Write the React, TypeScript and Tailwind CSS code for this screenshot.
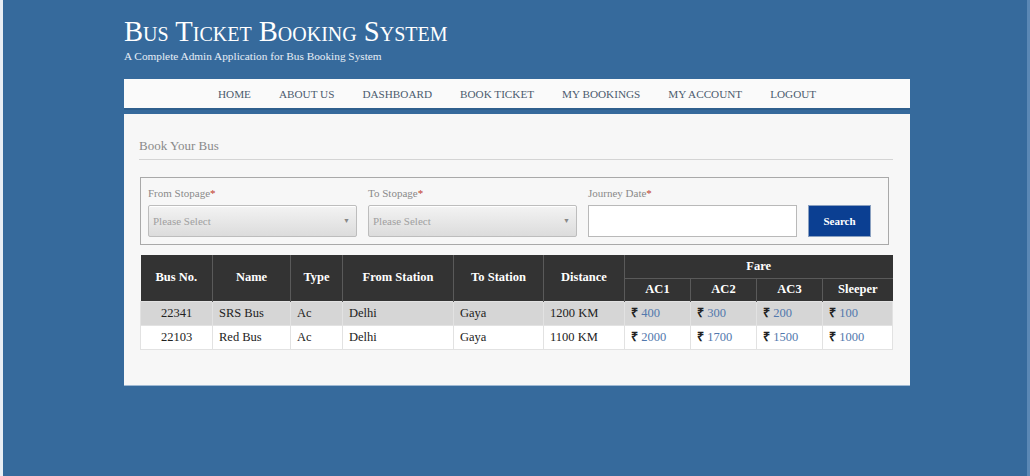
import React from "react";

const serif = { fontFamily: '"Liberation Serif", "Times New Roman", serif' };

const rows = [
  { no: "22341", name: "SRS Bus", type: "Ac", from: "Delhi", to: "Gaya", dist: "1200 KM", f: ["400", "300", "200", "100"], bg: "bg-[#d6d6d6]" },
  { no: "22103", name: "Red Bus", type: "Ac", from: "Delhi", to: "Gaya", dist: "1100 KM", f: ["2000", "1700", "1500", "1000"], bg: "bg-white" },
];

function Select({ w }: { w: string }) {
  return (
    <div className={`${w} h-[32px] border border-[#bdbdbd] rounded-[2px] bg-gradient-to-b from-[#f3f3f3] to-[#dcdcdc] flex items-center justify-between px-[4px] shadow-[inset_0_1px_0_#fff]`}>
      <span className="text-[11px] text-[#a0a0a0]">Please Select</span>
      <span className="text-[7px] text-[#888] pr-[2px]">▼</span>
    </div>
  );
}

export default function App() {
  return (
    <div style={serif} className="w-[1030px] h-[476px] bg-[#366a9c] border-l-[3px] border-l-[#e9eef4] border-r-[3px] border-r-[#5b88b5] overflow-hidden">
      <div className="pl-[121px] w-[907px]">
        <div className="pt-[15px] h-[79px]">
          <div className="text-[28.6px] leading-[34px] text-white [font-variant:small-caps]">Bus Ticket Booking System</div>
          <div className="text-[11.3px] leading-[12px] text-[#e6eef7] mt-[1px]">A Complete Admin Application for Bus Booking System</div>
        </div>
        <nav className="h-[31px] bg-[#fafafa] border-b-[2px] border-b-[#2f5f8d] flex items-center pl-[94px] gap-[28px] text-[11.2px] text-[#4b5b6e] pt-[1px]">
          <span>HOME</span>
          <span>ABOUT US</span>
          <span>DASHBOARD</span>
          <span>BOOK TICKET</span>
          <span>MY BOOKINGS</span>
          <span>MY ACCOUNT</span>
          <span>LOGOUT</span>
        </nav>
        <div className="mt-[4px] h-[271px] bg-[#f7f7f7] pl-[15px] pr-[17px] pt-[24px] shadow-[0_1px_0_#9fb9d3]">
          <div className="text-[13px] leading-[16px] text-[#8a8a8a] pb-[5px] border-b border-b-[#d4d4d4]">Book Your Bus</div>
          <div className="mt-[17px] ml-[1px] w-[749px] h-[68px] border border-[#a9a9a9] px-[7px] pt-[8px]">
            <div className="flex gap-[11px]">
              <div className="flex flex-col">
                <div className="text-[11px] leading-[14px] text-[#8a8a8a] mb-[5px]">From Stopage<span className="text-[#c0392b]">*</span></div>
                <Select w="w-[209px]" />
              </div>
              <div className="flex flex-col">
                <div className="text-[11px] leading-[14px] text-[#8a8a8a] mb-[5px]">To Stopage<span className="text-[#c0392b]">*</span></div>
                <Select w="w-[209px]" />
              </div>
              <div className="flex flex-col">
                <div className="text-[11px] leading-[14px] text-[#8a8a8a] mb-[5px]">Journey Date<span className="text-[#c0392b]">*</span></div>
                <div className="w-[209px] h-[32px] bg-white border border-[#b9b9b9]" />
              </div>
              <div className="flex flex-col justify-end">
                <div className="w-[63px] h-[32px] bg-[#0b3f92] border border-[#8aa0c0] text-white font-bold text-[11px] flex items-center justify-center">Search</div>
              </div>
            </div>
          </div>
          <table className="mt-[10px] ml-[1px] w-[753px] border-collapse text-[12.5px]">
            <thead className="bg-[#333333] text-white font-bold">
              <tr className="h-[23px]">
                <th rowSpan={2} className="w-[72px] border-r border-r-[#5a5a5a] font-bold">Bus No.</th>
                <th rowSpan={2} className="w-[78px] border-r border-r-[#5a5a5a] font-bold">Name</th>
                <th rowSpan={2} className="w-[52px] border-r border-r-[#5a5a5a] font-bold">Type</th>
                <th rowSpan={2} className="w-[111px] border-r border-r-[#5a5a5a] font-bold">From Station</th>
                <th rowSpan={2} className="w-[90px] border-r border-r-[#5a5a5a] font-bold">To Station</th>
                <th rowSpan={2} className="w-[81px] border-r border-r-[#5a5a5a] font-bold">Distance</th>
                <th colSpan={4} className="font-bold border-b border-b-[#5a5a5a]">Fare</th>
              </tr>
              <tr className="h-[23px]">
                <th className="w-[66px] border-r border-r-[#5a5a5a] font-bold">AC1</th>
                <th className="w-[66px] border-r border-r-[#5a5a5a] font-bold">AC2</th>
                <th className="w-[66px] border-r border-r-[#5a5a5a] font-bold">AC3</th>
                <th className="font-bold">Sleeper</th>
              </tr>
            </thead>
            <tbody className="text-[#222]">
              {rows.map((r) => (
                <tr key={r.no} className={`h-[24px] ${r.bg}`}>
                  <td className="text-center border border-[#e2e2e2]">{r.no}</td>
                  <td className="pl-[6px] border border-[#e2e2e2]">{r.name}</td>
                  <td className="pl-[6px] border border-[#e2e2e2]">{r.type}</td>
                  <td className="pl-[6px] border border-[#e2e2e2]">{r.from}</td>
                  <td className="pl-[6px] border border-[#e2e2e2]">{r.to}</td>
                  <td className="pl-[6px] border border-[#e2e2e2]">{r.dist}</td>
                  {r.f.map((v, i) => (
                    <td key={i} className="pl-[6px] border border-[#e2e2e2]">
                      <span className="text-[#222] font-bold">₹</span> <span className="text-[#5278ad]">{v}</span>
                    </td>
                  ))}
                </tr>
              ))}
            </tbody>
          </table>
        </div>
      </div>
    </div>
  );
}
